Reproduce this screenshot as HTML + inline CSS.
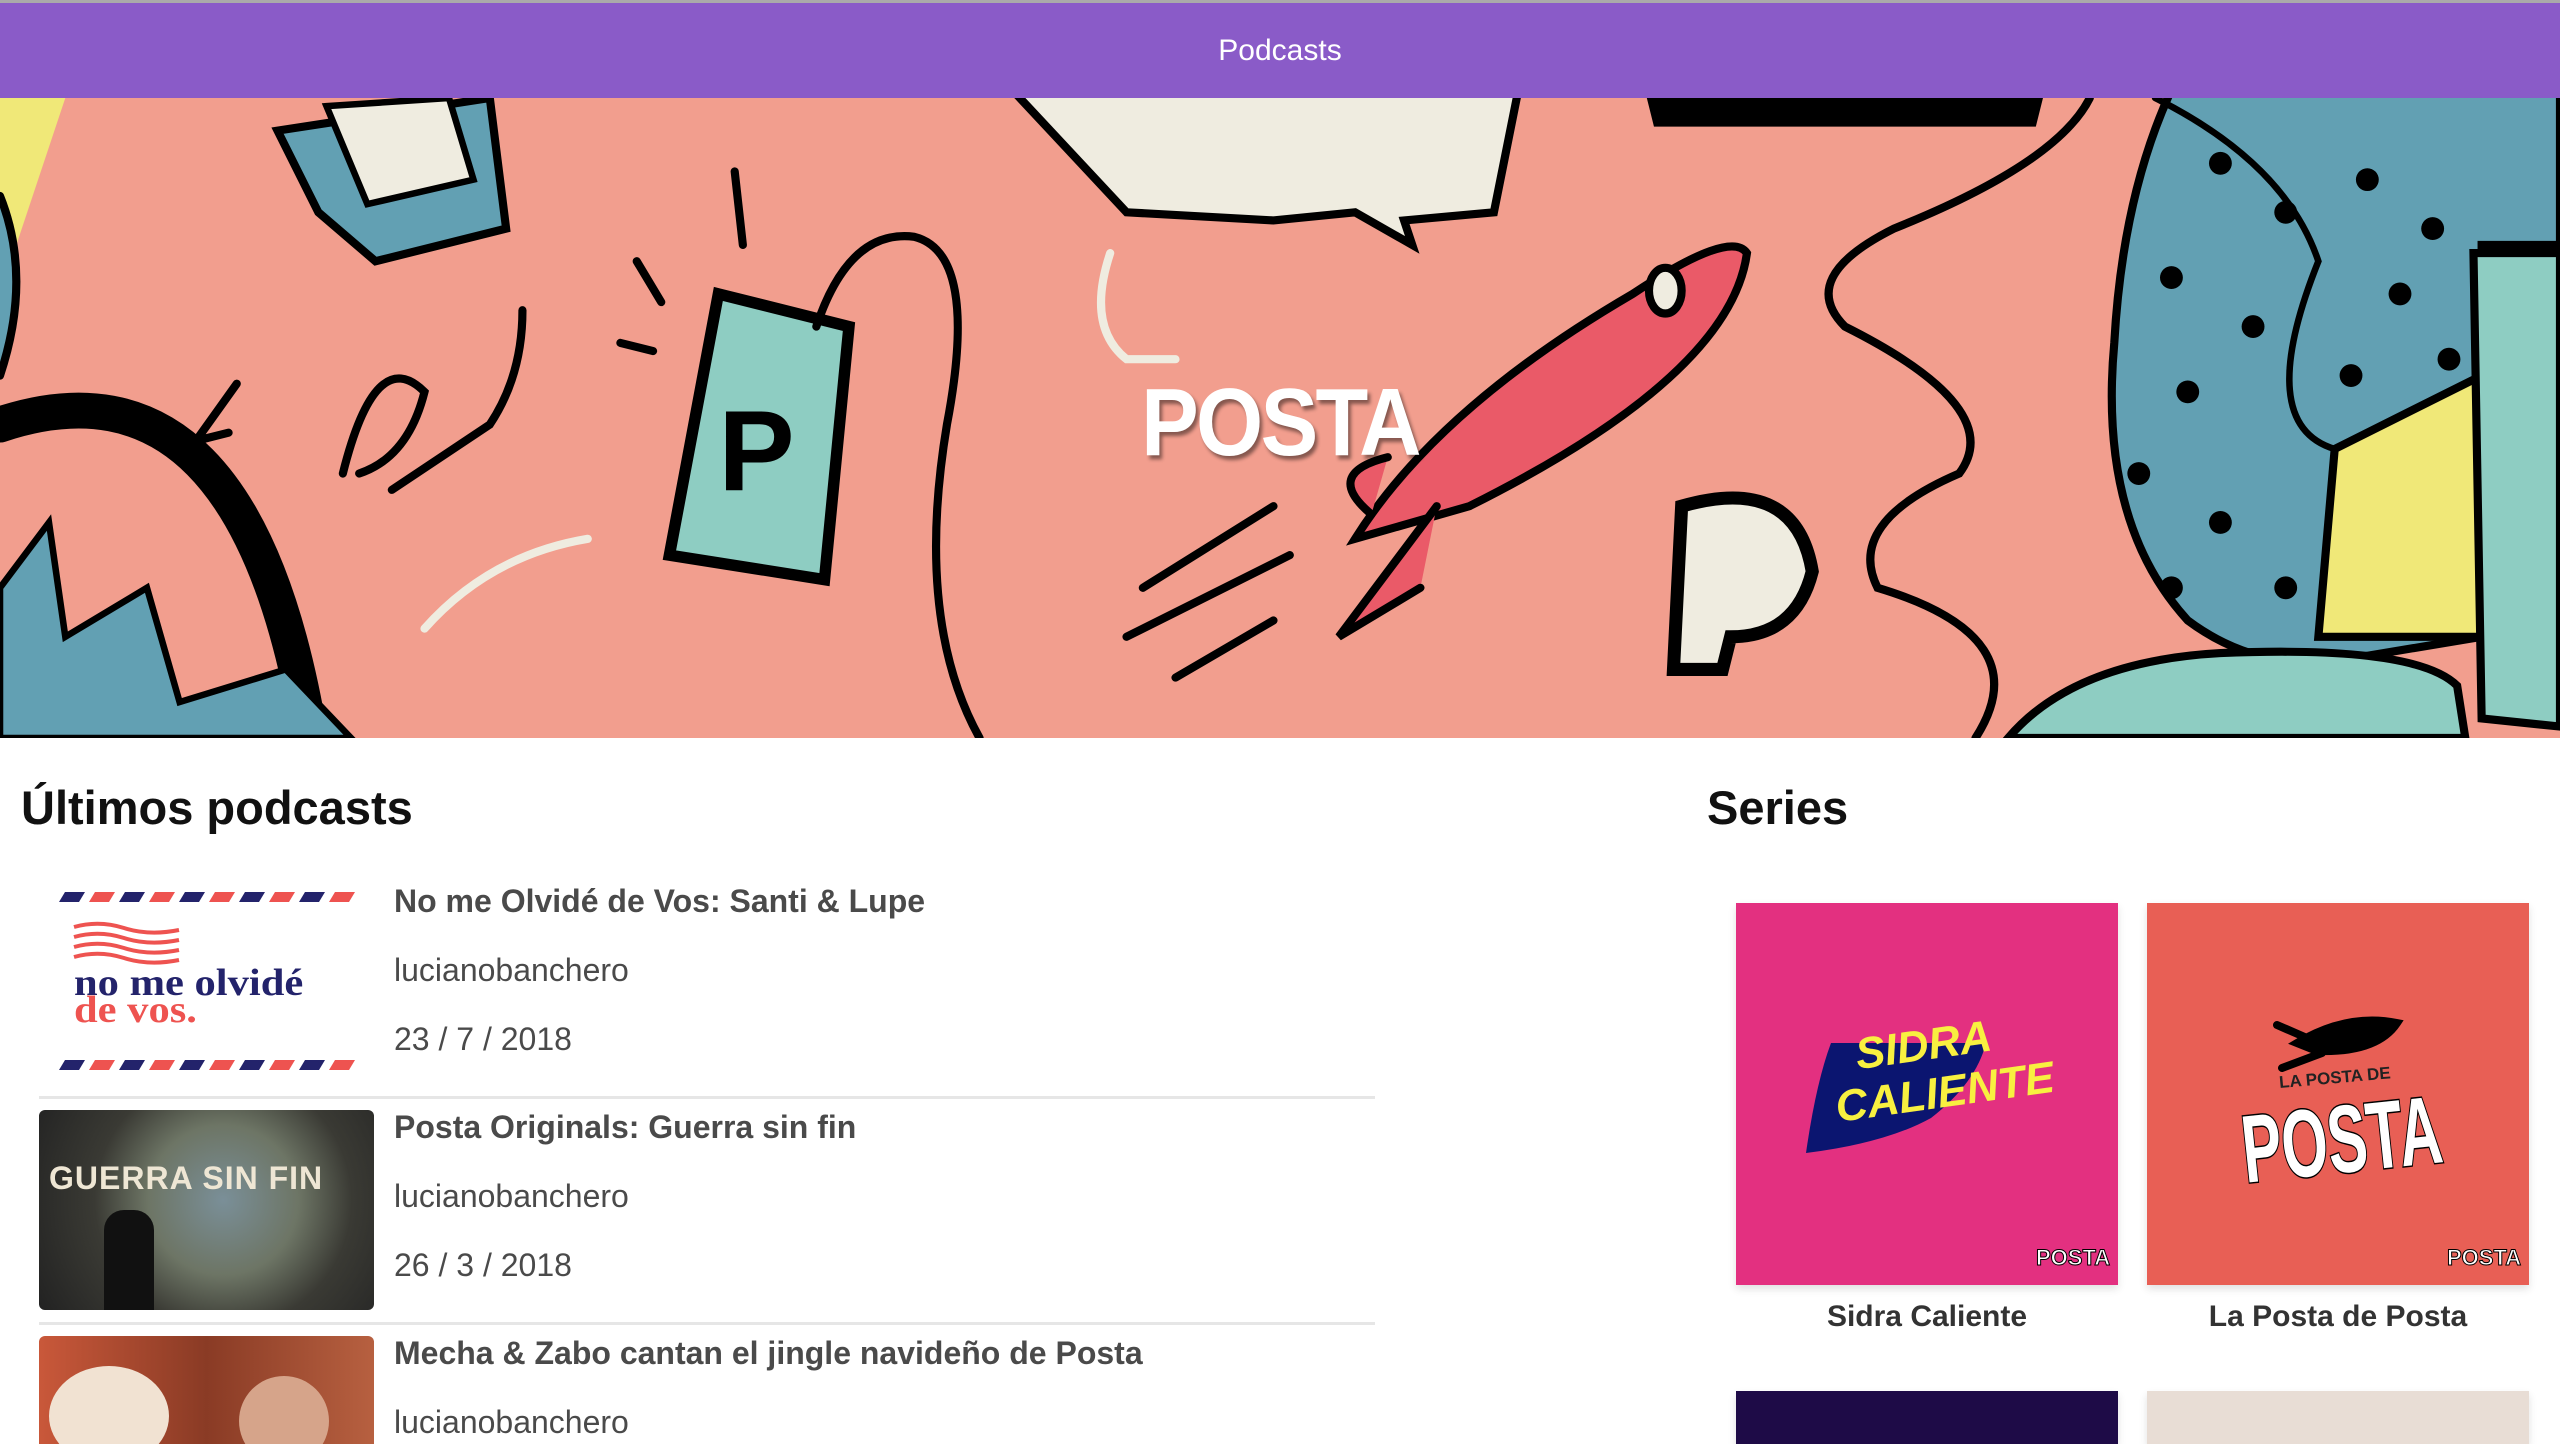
<!DOCTYPE html>
<html><head><meta charset="utf-8"><style>
*{margin:0;padding:0;box-sizing:border-box}
html,body{width:2560px;height:1444px;overflow:hidden}
body{background:#fff;font-family:"Liberation Sans",Arial,sans-serif;position:relative}
#wrap{position:absolute;left:0;top:0;width:2560px;height:1444px;overflow:hidden}
.hdr{position:absolute;left:0;top:0;width:2560px;height:98px;background:#8a5bc8;border-top:3px solid #aaa;color:#fff;font-size:30px;text-align:center;line-height:95px}
.hero{position:absolute;left:0;top:98px;width:2560px;height:640px;background:#f29e8e;overflow:hidden}
.hero h1{position:absolute;left:0;width:2560px;top:270px;text-align:center;color:#fff;font-size:96px;font-weight:bold;letter-spacing:-3px;text-shadow:3px 4px 4px rgba(0,0,0,.45);transform:scaleX(.9)}
.h2{position:absolute;font-size:47px;font-weight:bold;color:#111;top:780px}
.img{position:absolute;left:39px;width:335px;height:200px;border-radius:6px;overflow:hidden}
.t{position:absolute;left:394px;font-size:32px;color:#4a4a4a;white-space:nowrap}
.b{font-weight:bold}
.hr{position:absolute;left:39px;width:1336px;height:3px;background:#e6e6e6}
.card{position:absolute;width:382px;height:382px;box-shadow:0 4px 8px rgba(0,0,0,.12);overflow:hidden}
.cap{position:absolute;width:382px;text-align:center;font-size:30px;font-weight:bold;color:#333}
</style></head><body><div id="wrap">
<div class="hdr">Podcasts</div>
<div class="hero">
<svg width="2560" height="640" viewBox="0 0 1568 392" preserveAspectRatio="none">
<g stroke="#000" stroke-width="5" fill="none" stroke-linecap="round">
<path d="M0 0 L40 0 L10 90 L0 100Z" fill="#f0e878" stroke="none"/>
<path d="M0 60 Q20 110 0 170" fill="#62a0b3"/>
<path d="M1330 -5 Q1300 60 1295 150 Q1285 260 1340 320 Q1380 350 1430 345 L1520 330 L1520 90 L1568 90 L1568 -5Z" fill="#62a0b3"/>
<path d="M1430 215 L1520 170 L1545 220 L1540 330 L1420 330Z" fill="#f0e878"/>
<path d="M1515 95 L1568 95 L1568 385 L1520 380Z" fill="#8ecdc2"/>
<path d="M1230 392 Q1270 345 1360 340 Q1480 335 1505 360 L1510 392Z" fill="#8ecdc2"/>
<path d="M0 200 Q150 150 190 392" stroke-width="22"/>
<path d="M0 392 L0 300 L30 260 L40 330 L90 300 L110 370 L175 350 L215 392Z" fill="#62a0b3" stroke-width="4"/>
<path d="M170 20 L300 0 L310 80 L230 100 L195 70Z" fill="#62a0b3"/>
<path d="M200 5 L275 0 L290 50 L225 65Z" fill="#efece0" stroke-width="4"/>
<path d="M620 -5 L930 -5 L915 70 L860 75 L865 90 L830 70 L780 75 L690 70 Z" fill="#efece0"/>
<path d="M1010 -5 L1250 -5 L1245 15 L1015 15Z" fill="#000"/>
<path d="M440 120 L520 140 L505 295 L410 280Z" fill="#8ecdc2" stroke-width="7"/>
<text x="440" y="240" font-family="Liberation Sans" font-size="70" font-weight="bold" fill="#000" stroke="none">P</text>
<path d="M500 140 Q520 80 560 85 Q600 95 580 200 Q560 320 600 392"/>
<path d="M1280 0 Q1260 40 1160 80 Q1100 110 1130 140 Q1230 190 1200 230 Q1130 260 1150 300 Q1250 330 1210 392"/>
<path d="M830 270 Q880 190 1000 120 Q1060 80 1070 95 Q1060 170 900 250 Z" fill="#ea5a68" stroke-width="5"/>
<path d="M850 220 Q810 230 840 255 M880 250 L820 330 L870 300" fill="#ea5a68"/>
<ellipse cx="1020" cy="118" rx="10" ry="14" fill="#efece0"/>
<path d="M700 300 L780 250 M690 330 L790 280 M720 355 L780 320"/>
<path d="M1030 250 Q1100 230 1110 290 Q1100 330 1060 330 L1055 350 L1025 350Z" fill="#efece0" stroke-width="8"/>
<path d="M120 210 L145 175 M120 210 L140 205"/>
<path d="M210 230 Q230 150 260 180 Q250 220 220 230 M240 240 L300 200 Q320 170 320 130"/>
<path d="M680 95 Q665 140 690 160 L720 160" stroke="#efece0"/>
<path d="M360 270 Q300 280 260 325" stroke="#efece0"/>
<path d="M380 150 L400 155 M390 100 L405 125 M450 45 L455 90"/>
<path d="M1320 0 Q1400 40 1420 100 Q1380 200 1430 215" stroke-width="4"/>
</g>
<g fill="#000">
<circle cx="1360" cy="40" r="7"/><circle cx="1400" cy="70" r="7"/><circle cx="1450" cy="50" r="7"/><circle cx="1490" cy="80" r="7"/>
<circle cx="1330" cy="110" r="7"/><circle cx="1380" cy="140" r="7"/><circle cx="1340" cy="180" r="7"/><circle cx="1470" cy="120" r="7"/>
<circle cx="1310" cy="230" r="7"/><circle cx="1360" cy="260" r="7"/><circle cx="1330" cy="300" r="7"/><circle cx="1400" cy="300" r="7"/>
<circle cx="1500" cy="160" r="7"/><circle cx="1440" cy="170" r="7"/>
</g>
</svg>
<h1>POSTA</h1>
</div>

<div class="h2" style="left:21px">Últimos podcasts</div>
<div class="h2" style="left:1707px">Series</div>

<div class="img" style="top:882px;background:#fff">
<svg width="335" height="200" viewBox="0 0 335 200">
<g id="s">
<polygon points="20,20 40,20 46,10 26,10" fill="#23236b"/><polygon points="50,20 70,20 76,10 56,10" fill="#ee5350"/>
<polygon points="80,20 100,20 106,10 86,10" fill="#23236b"/><polygon points="110,20 130,20 136,10 116,10" fill="#ee5350"/>
<polygon points="140,20 160,20 166,10 146,10" fill="#23236b"/><polygon points="170,20 190,20 196,10 176,10" fill="#ee5350"/>
<polygon points="200,20 220,20 226,10 206,10" fill="#23236b"/><polygon points="230,20 250,20 256,10 236,10" fill="#ee5350"/>
<polygon points="260,20 280,20 286,10 266,10" fill="#23236b"/><polygon points="290,20 310,20 316,10 296,10" fill="#ee5350"/>
</g>
<use href="#s" y="168"/>
<g fill="none" stroke="#ee5350" stroke-width="4">
<path d="M35 45 Q60 38 85 46 T140 48"/><path d="M35 55 Q60 48 85 56 T140 58"/><path d="M35 65 Q60 58 85 66 T140 68"/><path d="M35 75 Q60 68 85 76 T140 78"/>
</g>
<text x="35" y="113" font-family="Liberation Serif" font-weight="bold" font-size="38" fill="#23236b" transform="scale(1.12 1)" transform-origin="35 113">no me olvidé</text>
<text x="35" y="140" font-family="Liberation Serif" font-weight="bold" font-size="38" fill="#ee5350" transform="scale(1.12 1)" transform-origin="35 140">de vos.</text>
</svg></div>
<div class="t b" style="top:883px">No me Olvidé de Vos: Santi &amp; Lupe</div>
<div class="t" style="top:952px">lucianobanchero</div>
<div class="t" style="top:1021px">23 / 7 / 2018</div>
<div class="hr" style="top:1096px"></div>

<div class="img" style="top:1110px;background:radial-gradient(circle at 55% 45%,#7a8f98 0,#6d7565 35%,#3a3a34 60%,#222 100%)">
<div style="position:absolute;left:10px;top:50px;font-size:32px;font-weight:bold;color:#eee6d4;letter-spacing:1px">GUERRA SIN FIN</div>
<div style="position:absolute;left:65px;top:100px;width:50px;height:100px;background:#111;border-radius:20px 20px 0 0"></div>
</div>
<div class="t b" style="top:1109px">Posta Originals: Guerra sin fin</div>
<div class="t" style="top:1178px">lucianobanchero</div>
<div class="t" style="top:1247px">26 / 3 / 2018</div>
<div class="hr" style="top:1322px"></div>

<div class="img" style="top:1336px;height:108px;border-radius:6px 6px 0 0;background:linear-gradient(90deg,#c9583a,#8a3b25 50%,#b76040)">
<div style="position:absolute;left:10px;top:30px;width:120px;height:100px;background:#f1e2d2;border-radius:50%"></div>
<div style="position:absolute;left:200px;top:40px;width:90px;height:90px;background:#d6a48a;border-radius:50%"></div>
</div>
<div class="t b" style="top:1335px">Mecha &amp; Zabo cantan el jingle navideño de Posta</div>
<div class="t" style="top:1404px">lucianobanchero</div>

<div class="card" style="left:1736px;top:903px;background:#e33080">
<svg width="382" height="382" viewBox="0 0 382 382">
<path d="M95 140 Q80 180 70 250 Q150 240 195 215 Q240 180 250 140 Z" fill="#0b1570"/>
<text x="120" y="158" font-family="Liberation Sans" font-weight="bold" font-style="italic" font-size="44" fill="#f8f040" transform="rotate(-8 180 150)">SIDRA</text>
<text x="100" y="208" font-family="Liberation Sans" font-weight="bold" font-style="italic" font-size="44" fill="#f8f040" transform="rotate(-8 180 200)">CALIENTE</text>
<text x="300" y="362" font-family="Liberation Sans" font-weight="bold" font-size="22" fill="#fff" stroke="#000" stroke-width="1">POSTA</text>
</svg></div>
<div class="cap" style="left:1736px;top:1300px">Sidra Caliente</div>

<div class="card" style="left:2147px;top:903px;background:#e85f55">
<svg width="382" height="382" viewBox="0 0 382 382">
<path d="M150 140 Q200 110 250 120 Q230 150 170 148 Z M130 122 L160 135 M135 165 L175 150" fill="#000" stroke="#000" stroke-width="8" stroke-linecap="round"/>
<text x="132" y="180" font-family="Liberation Sans" font-weight="bold" font-size="17" fill="#222" transform="rotate(-5 190 175)">LA POSTA DE</text>
<text x="95" y="270" font-family="Liberation Sans" font-weight="bold" font-size="96" fill="#fff" stroke="#000" stroke-width="3" textLength="200" lengthAdjust="spacingAndGlyphs" transform="rotate(-6 190 240)" style="paint-order:stroke">POSTA</text>
<text x="300" y="362" font-family="Liberation Sans" font-weight="bold" font-size="22" fill="#fff" stroke="#000" stroke-width="1">POSTA</text>
</svg></div>
<div class="cap" style="left:2147px;top:1300px">La Posta de Posta</div>

<div class="card" style="left:1736px;top:1391px;height:53px;background:#1e0b47"></div>
<div class="card" style="left:2147px;top:1391px;height:53px;background:#e8ddd5"></div>
</div></body></html>
